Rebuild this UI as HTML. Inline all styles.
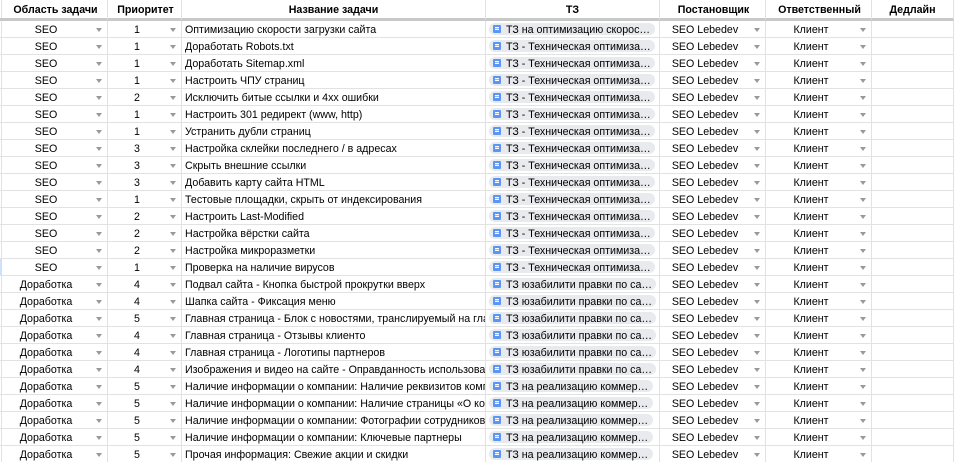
<!DOCTYPE html>
<html><head><meta charset="utf-8"><style>
html,body{margin:0;padding:0;background:#fff;width:954px;height:462px;overflow:hidden}
table{border-collapse:separate;border-spacing:0;table-layout:fixed;width:954px;font:10.67px "Liberation Sans",Arial,sans-serif;color:#000}
td,th{padding:2px 0 0;height:14px;border-right:1px solid #e2e2e2;border-bottom:1px solid #e2e2e2;white-space:nowrap;overflow:hidden;position:relative;line-height:14px;box-sizing:content-box}
th{font-weight:bold;text-align:center;padding-top:3px;height:15px;line-height:15px;border-bottom:3px solid #c8c8c8;border-right-color:#e2e2e2}
th span{position:relative}
td.c{text-align:center;padding-right:15px}
td.t{padding-left:3px}
td.c i{position:absolute;right:5px;top:7px;width:0;height:0;border:3.5px solid transparent;border-top:4px solid #999;border-bottom:0}
b{position:absolute;left:3px;top:2px;height:12px;line-height:14px;background:#e9eaee;border-radius:6px;font-weight:normal;padding-left:17px;box-sizing:border-box;width:166px}
b.y{width:167px}b.r{width:164px}
u{position:absolute;left:4px;top:2px;width:8px;height:8px;background:#5b95f5;border-radius:1px}
u:after{content:"";position:absolute;left:2px;top:2px;width:4px;height:3px;background:linear-gradient(#fff 1px,#8fb6f8 1px,#8fb6f8 2px,#fff 2px)}
td:first-child,th:first-child{box-shadow:inset 1px 0 0 #fff,inset 2px 0 0 #e2e2e2}
td.s:first-child{box-shadow:inset 2px 0 0 #cfe0fc}
</style></head><body>
<table><colgroup><col style="width:108px"><col style="width:74px"><col style="width:304px"><col style="width:174px"><col style="width:106px"><col style="width:106px"><col style="width:82px"></colgroup>
<tr><th><span style="left:2px">Область задачи</span></th><th><span style="left:1px">Приоритет</span></th><th>Название задачи</th><th>ТЗ</th><th><span style="left:1px">Постановщик</span></th><th><span style="left:1px">Ответственный</span></th><th>Дедлайн</th></tr>
<tr><td class="c">SEO<i></i></td><td class="c">1<i></i></td><td class="t">Оптимизацию скорости загрузки сайта</td><td><b><u></u>ТЗ на оптимизацию скорос…</b></td><td class="c">SEO Lebedev<i></i></td><td class="c">Клиент<i></i></td><td></td></tr>
<tr><td class="c">SEO<i></i></td><td class="c">1<i></i></td><td class="t">Доработать Robots.txt</td><td><b><u></u>ТЗ - Техническая оптимиза…</b></td><td class="c">SEO Lebedev<i></i></td><td class="c">Клиент<i></i></td><td></td></tr>
<tr><td class="c">SEO<i></i></td><td class="c">1<i></i></td><td class="t">Доработать Sitemap.xml</td><td><b><u></u>ТЗ - Техническая оптимиза…</b></td><td class="c">SEO Lebedev<i></i></td><td class="c">Клиент<i></i></td><td></td></tr>
<tr><td class="c">SEO<i></i></td><td class="c">1<i></i></td><td class="t">Настроить ЧПУ страниц</td><td><b><u></u>ТЗ - Техническая оптимиза…</b></td><td class="c">SEO Lebedev<i></i></td><td class="c">Клиент<i></i></td><td></td></tr>
<tr><td class="c">SEO<i></i></td><td class="c">2<i></i></td><td class="t">Исключить битые ссылки и 4хх ошибки</td><td><b><u></u>ТЗ - Техническая оптимиза…</b></td><td class="c">SEO Lebedev<i></i></td><td class="c">Клиент<i></i></td><td></td></tr>
<tr><td class="c">SEO<i></i></td><td class="c">1<i></i></td><td class="t">Настроить 301 редирект (www, http)</td><td><b><u></u>ТЗ - Техническая оптимиза…</b></td><td class="c">SEO Lebedev<i></i></td><td class="c">Клиент<i></i></td><td></td></tr>
<tr><td class="c">SEO<i></i></td><td class="c">1<i></i></td><td class="t">Устранить дубли страниц</td><td><b><u></u>ТЗ - Техническая оптимиза…</b></td><td class="c">SEO Lebedev<i></i></td><td class="c">Клиент<i></i></td><td></td></tr>
<tr><td class="c">SEO<i></i></td><td class="c">3<i></i></td><td class="t">Настройка склейки последнего / в адресах</td><td><b><u></u>ТЗ - Техническая оптимиза…</b></td><td class="c">SEO Lebedev<i></i></td><td class="c">Клиент<i></i></td><td></td></tr>
<tr><td class="c">SEO<i></i></td><td class="c">3<i></i></td><td class="t">Скрыть внешние ссылки</td><td><b><u></u>ТЗ - Техническая оптимиза…</b></td><td class="c">SEO Lebedev<i></i></td><td class="c">Клиент<i></i></td><td></td></tr>
<tr><td class="c">SEO<i></i></td><td class="c">3<i></i></td><td class="t">Добавить карту сайта HTML</td><td><b><u></u>ТЗ - Техническая оптимиза…</b></td><td class="c">SEO Lebedev<i></i></td><td class="c">Клиент<i></i></td><td></td></tr>
<tr><td class="c">SEO<i></i></td><td class="c">1<i></i></td><td class="t">Тестовые площадки, скрыть от индексирования</td><td><b><u></u>ТЗ - Техническая оптимиза…</b></td><td class="c">SEO Lebedev<i></i></td><td class="c">Клиент<i></i></td><td></td></tr>
<tr><td class="c">SEO<i></i></td><td class="c">2<i></i></td><td class="t">Настроить Last-Modified</td><td><b><u></u>ТЗ - Техническая оптимиза…</b></td><td class="c">SEO Lebedev<i></i></td><td class="c">Клиент<i></i></td><td></td></tr>
<tr><td class="c">SEO<i></i></td><td class="c">2<i></i></td><td class="t">Настройка вёрстки сайта</td><td><b><u></u>ТЗ - Техническая оптимиза…</b></td><td class="c">SEO Lebedev<i></i></td><td class="c">Клиент<i></i></td><td></td></tr>
<tr><td class="c">SEO<i></i></td><td class="c">2<i></i></td><td class="t">Настройка микроразметки</td><td><b><u></u>ТЗ - Техническая оптимиза…</b></td><td class="c">SEO Lebedev<i></i></td><td class="c">Клиент<i></i></td><td></td></tr>
<tr><td class="c s">SEO<i></i></td><td class="c">1<i></i></td><td class="t">Проверка на наличие вирусов</td><td><b><u></u>ТЗ - Техническая оптимиза…</b></td><td class="c">SEO Lebedev<i></i></td><td class="c">Клиент<i></i></td><td></td></tr>
<tr><td class="c">Доработка<i></i></td><td class="c">4<i></i></td><td class="t">Подвал сайта - Кнопка быстрой прокрутки вверх</td><td><b class="y"><u></u>ТЗ юзабилити правки по са…</b></td><td class="c">SEO Lebedev<i></i></td><td class="c">Клиент<i></i></td><td></td></tr>
<tr><td class="c">Доработка<i></i></td><td class="c">4<i></i></td><td class="t">Шапка сайта - Фиксация меню</td><td><b class="y"><u></u>ТЗ юзабилити правки по са…</b></td><td class="c">SEO Lebedev<i></i></td><td class="c">Клиент<i></i></td><td></td></tr>
<tr><td class="c">Доработка<i></i></td><td class="c">5<i></i></td><td class="t">Главная страница - Блок с новостями, транслируемый на главной</td><td><b class="y"><u></u>ТЗ юзабилити правки по са…</b></td><td class="c">SEO Lebedev<i></i></td><td class="c">Клиент<i></i></td><td></td></tr>
<tr><td class="c">Доработка<i></i></td><td class="c">4<i></i></td><td class="t">Главная страница - Отзывы клиенто</td><td><b class="y"><u></u>ТЗ юзабилити правки по са…</b></td><td class="c">SEO Lebedev<i></i></td><td class="c">Клиент<i></i></td><td></td></tr>
<tr><td class="c">Доработка<i></i></td><td class="c">4<i></i></td><td class="t">Главная страница - Логотипы партнеров</td><td><b class="y"><u></u>ТЗ юзабилити правки по са…</b></td><td class="c">SEO Lebedev<i></i></td><td class="c">Клиент<i></i></td><td></td></tr>
<tr><td class="c">Доработка<i></i></td><td class="c">4<i></i></td><td class="t">Изображения и видео на сайте - Оправданность использования</td><td><b class="y"><u></u>ТЗ юзабилити правки по са…</b></td><td class="c">SEO Lebedev<i></i></td><td class="c">Клиент<i></i></td><td></td></tr>
<tr><td class="c">Доработка<i></i></td><td class="c">5<i></i></td><td class="t">Наличие информации о компании: Наличие реквизитов компании</td><td><b class="r"><u></u>ТЗ на реализацию коммер…</b></td><td class="c">SEO Lebedev<i></i></td><td class="c">Клиент<i></i></td><td></td></tr>
<tr><td class="c">Доработка<i></i></td><td class="c">5<i></i></td><td class="t">Наличие информации о компании: Наличие страницы «О компании»</td><td><b class="r"><u></u>ТЗ на реализацию коммер…</b></td><td class="c">SEO Lebedev<i></i></td><td class="c">Клиент<i></i></td><td></td></tr>
<tr><td class="c">Доработка<i></i></td><td class="c">5<i></i></td><td class="t">Наличие информации о компании: Фотографии сотрудников компании</td><td><b class="r"><u></u>ТЗ на реализацию коммер…</b></td><td class="c">SEO Lebedev<i></i></td><td class="c">Клиент<i></i></td><td></td></tr>
<tr><td class="c">Доработка<i></i></td><td class="c">5<i></i></td><td class="t">Наличие информации о компании: Ключевые партнеры</td><td><b class="r"><u></u>ТЗ на реализацию коммер…</b></td><td class="c">SEO Lebedev<i></i></td><td class="c">Клиент<i></i></td><td></td></tr>
<tr><td class="c">Доработка<i></i></td><td class="c">5<i></i></td><td class="t">Прочая информация: Свежие акции и скидки</td><td><b class="r"><u></u>ТЗ на реализацию коммер…</b></td><td class="c">SEO Lebedev<i></i></td><td class="c">Клиент<i></i></td><td></td></tr>
</table>
</body></html>
